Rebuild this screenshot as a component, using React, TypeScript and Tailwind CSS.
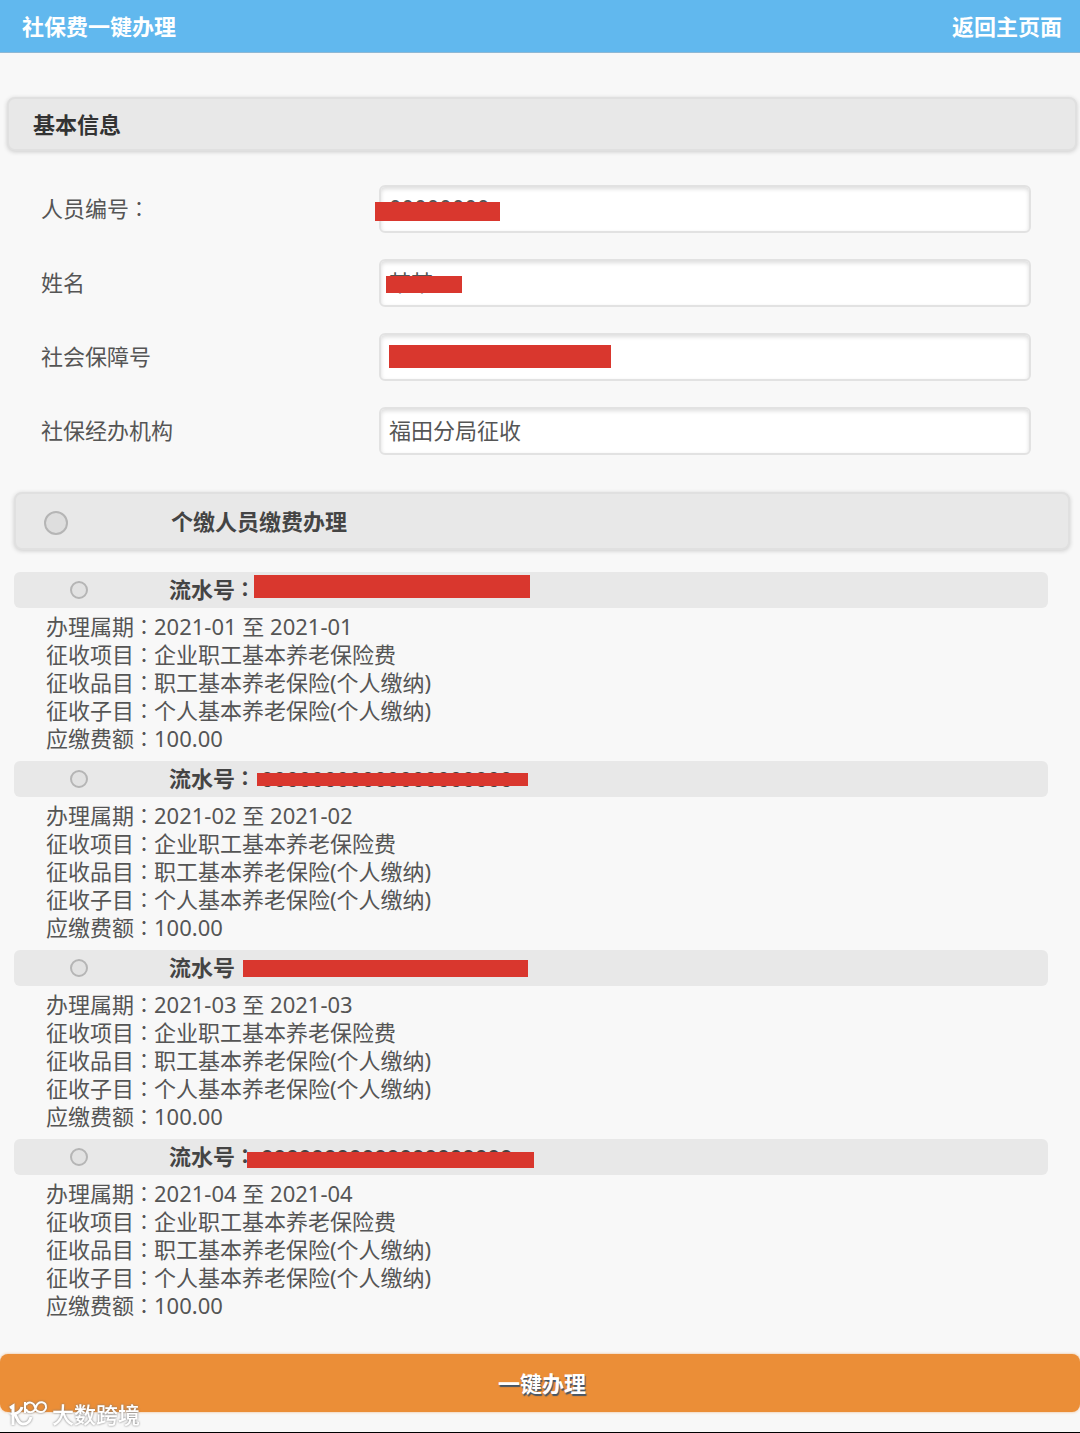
import React from "react";

type Field = { id: string; label: string; colon?: boolean; value: string; mask?: string };

const fields: Field[] = [
  { id: "person-no", label: "人员编号", colon: true, value: "00000000", mask: "-left-1 top-[17px] h-[19px] w-[125px]" },
  { id: "name", label: "姓名", value: "某某", mask: "left-[7px] top-[17px] h-[17px] w-[76px]" },
  { id: "social-no", label: "社会保障号", value: "", mask: "left-[10px] top-[12px] h-[23px] w-[222px]" },
  { id: "agency", label: "社保经办机构", value: "福田分局征收" },
];

type Rec = { month: string; colon: boolean; digits: boolean; mask: string };

const records: Rec[] = [
  { month: "2021-01", colon: true, digits: true, mask: "left-[85px] top-[3px] h-[23px] w-[276px]" },
  { month: "2021-02", colon: true, digits: true, mask: "left-[88px] top-[12px] h-[13px] w-[271px]" },
  { month: "2021-03", colon: false, digits: false, mask: "left-[74px] top-[10px] h-[17px] w-[285px]" },
  { month: "2021-04", colon: true, digits: true, mask: "left-[78px] top-[13px] h-[16px] w-[287px]" },
];

function Colon() {
  return <span className="font-['Noto_Sans_CJK_TC',sans-serif] text-[20px]">：</span>;
}

function Mask({ className }: { className: string }) {
  return <span aria-hidden="true" className={`absolute bg-[#d9372e] ${className}`} />;
}

function FieldRow({ field }: { field: Field }) {
  return (
    <div className="flex items-center">
      <label htmlFor={field.id} className="h-[34px] w-[338px] shrink-0">
        {field.label}
        {field.colon && <Colon />}
      </label>
      <div className="relative flex-1">
        <input
          id={field.id}
          type="text"
          readOnly
          defaultValue={field.value}
          className="block h-12 w-full rounded-md border-2 border-[#e2e2e2] bg-white px-2 pb-1 shadow-[inset_0_2px_4px_#dddddd] outline-none"
        />
        {field.mask && <Mask className={field.mask} />}
      </div>
    </div>
  );
}

function Line({ label, children }: { label: string; children: React.ReactNode }) {
  return (
    <p className="h-7">
      {label}
      <Colon />
      {children}
    </p>
  );
}

function RecordItem({ record }: { record: Rec }) {
  return (
    <li className="pb-2">
      <label className="mr-2 flex h-9 items-center rounded-md bg-[#e8e8e8] pl-14 font-bold text-[#444]">
        <input
          type="radio"
          name="record"
          className="mr-[81px] size-[18px] shrink-0 appearance-none rounded-full border-2 border-[#b5b5b5] bg-[#e2e2e2] checked:bg-[#888]"
        />
        <span className="relative flex h-9 items-center pb-0.5">
          流水号
          {record.colon && <Colon />}
          {record.digits && <span className="ml-1.5">00000000000000000000</span>}
          <Mask className={record.mask} />
        </span>
      </label>
      <div className="pt-1 pb-px pl-8 leading-7">
        <Line label="办理属期">
          {record.month} 至 {record.month}
        </Line>
        <Line label="征收项目">企业职工基本养老保险费</Line>
        <Line label="征收品目">职工基本养老保险(个人缴纳)</Line>
        <Line label="征收子目">个人基本养老保险(个人缴纳)</Line>
        <Line label="应缴费额">100.00</Line>
      </div>
    </li>
  );
}

function Watermark() {
  return (
    <div className="pointer-events-none absolute bottom-0.5 left-2 flex items-center gap-1 text-white drop-shadow-[0_0_1px_#777]">
      <svg width="40" height="28" viewBox="0 0 40 28" fill="none" stroke="currentColor" aria-hidden="true">
        <path d="M2 8 L5 6 V25" strokeWidth="3" />
        <path d="M14 7 C13 11 10 13 6 14 C9 15 9 24 15 24 C20 24 22 21 23 17" strokeWidth="3" />
        <path d="M17 2 V13" strokeWidth="2" />
        <path d="M18 5 C20 1 26 2 27 7 C28 13 36 14 38 8 C39 1 30 0 28 7 C26 14 19 13 18 9" strokeWidth="2" />
      </svg>
      <span className="text-[22px] leading-8 font-medium">大数跨境</span>
    </div>
  );
}

export default function App() {
  return (
    <div className="relative border-b border-black bg-[#f8f8f8] font-['Noto_Sans','Noto_Sans_CJK_SC',sans-serif] text-[22px] leading-8 text-[#555]">
      <header className="flex h-[53px] items-center justify-between border-b border-[#8fb8d4] bg-[#61b8ee] pr-[18px] pl-[22px] font-bold text-white">
        <h1>社保费一键办理</h1>
        <a href="#home">返回主页面</a>
      </header>

      <main className="pt-11">
        <h2 className="mr-[3px] ml-[7px] flex h-[54px] items-center rounded-lg border-2 border-[#e0e0e0] bg-[#e8e8e8] px-6 font-bold text-[#333] shadow-[0_1px_4px_#cccccc]">
          基本信息
        </h2>

        <section className="flex flex-col gap-[26px] pt-[34px] pr-[49px] pl-[41px]">
          {fields.map((field) => (
            <FieldRow key={field.id} field={field} />
          ))}
        </section>

        <section className="mt-[37px] mr-[10px] ml-[14px]">
          <label className="flex h-[58px] items-center rounded-lg border-2 border-[#e0e0e0] bg-[#e8e8e8] pl-7 font-bold text-[#444] shadow-[0_1px_4px_#cccccc]">
            <input
              type="radio"
              name="group"
              className="mt-1 mr-[103px] size-6 shrink-0 appearance-none rounded-full border-2 border-[#b5b5b5] bg-[#dedede] checked:bg-[#888]"
            />
            个缴人员缴费办理
          </label>
          <ul className="mt-[22px] mr-[14px]">
            {records.map((record) => (
              <RecordItem key={record.month} record={record} />
            ))}
          </ul>
        </section>
      </main>

      <button
        type="button"
        className="mt-[26px] mb-5 block h-[58px] w-full rounded-lg bg-[#eb8e37] pl-1 font-bold text-white shadow-[0_0_3px_#eeb988] [text-shadow:1px_2px_1px_#456]"
      >
        一键办理
      </button>
      <Watermark />
    </div>
  );
}
